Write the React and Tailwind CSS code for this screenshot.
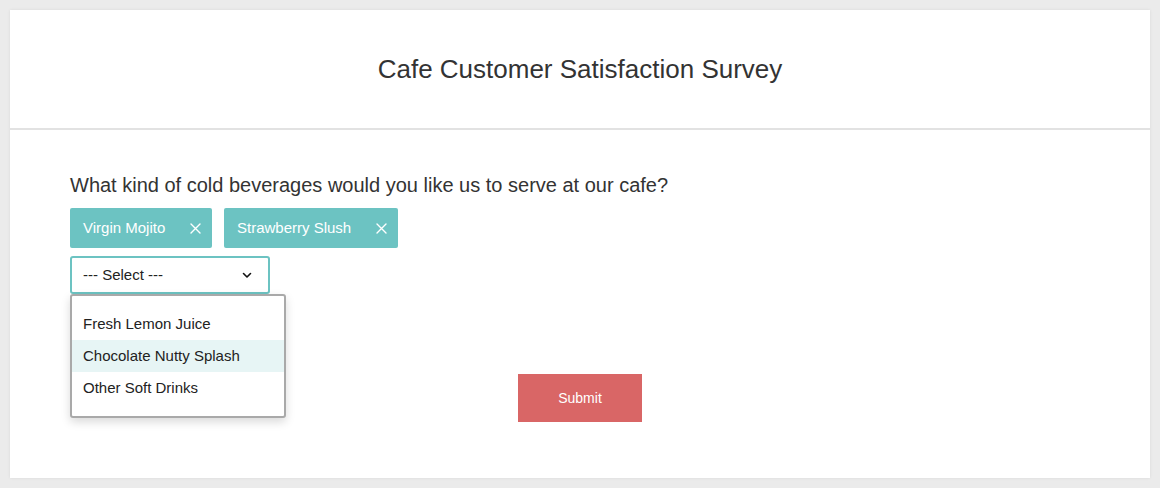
import React from "react";

function XIcon() {
  return (
    <svg width="11" height="11" viewBox="0 0 11 11" className="shrink-0">
      <path d="M1 1 L10 10 M10 1 L1 10" stroke="white" strokeWidth="1.4" strokeLinecap="round" />
    </svg>
  );
}

function Tag({ label, width }) {
  return (
    <div className={`flex h-[40px] items-center justify-between rounded-[2px] bg-[#6cc3c2] pl-[13px] pr-[11px] text-[15px] text-white ${width}`}>
      <span>{label}</span>
      <XIcon />
    </div>
  );
}

export default function App() {
  return (
    <div className="min-h-[488px] bg-[#ebebeb] p-[10px] font-['Liberation_Sans',Arial,sans-serif]">
      <div className="h-[468px] bg-white shadow-[0_0_3px_rgba(0,0,0,0.08)]">
        <div className="flex h-[120px] items-center justify-center border-b-2 border-[#e2e2e2] text-[26px] text-[#333]">
          Cafe Customer Satisfaction Survey
        </div>
        <div className="px-[60px] pt-[43px]">
          <div className="text-[20px] leading-[24px] text-[#333]">
            What kind of cold beverages would you like us to serve at our cafe?
          </div>
          <div className="mt-[11px] flex gap-[12px]">
            <Tag label="Virgin Mojito" width="w-[142px]" />
            <Tag label="Strawberry Slush" width="w-[174px]" />
          </div>
          <div className="relative mt-[8px] w-[200px]">
            <div className="flex h-[38px] items-center justify-between rounded-[3px] border-2 border-[#6cc3c2] pl-[11px] pr-[16px] text-[15px] text-[#222]">
              <span>--- Select ---</span>
              <svg width="10" height="7" viewBox="0 0 10 7">
                <path d="M1.5 1.5 L5 5 L8.5 1.5" stroke="#111" strokeWidth="1.6" fill="none" strokeLinecap="round" strokeLinejoin="round" />
              </svg>
            </div>
            <div className="absolute left-0 top-[38px] z-10 w-[216px] rounded-[3px] border-2 border-[#a9a9a9] bg-white py-[12px] text-[15px] text-[#222] shadow-[0_4px_10px_rgba(0,0,0,0.15)]">
              <div className="flex h-[32px] items-center px-[11px]">Fresh Lemon Juice</div>
              <div className="flex h-[32px] items-center bg-[#e7f5f5] px-[11px]">Chocolate Nutty Splash</div>
              <div className="flex h-[32px] items-center px-[11px]">Other Soft Drinks</div>
            </div>
          </div>
          <div className="mt-[80px] flex justify-center">
            <button className="h-[48px] w-[124px] bg-[#d96666] text-[14px] text-white">
              Submit
            </button>
          </div>
        </div>
      </div>
    </div>
  );
}
